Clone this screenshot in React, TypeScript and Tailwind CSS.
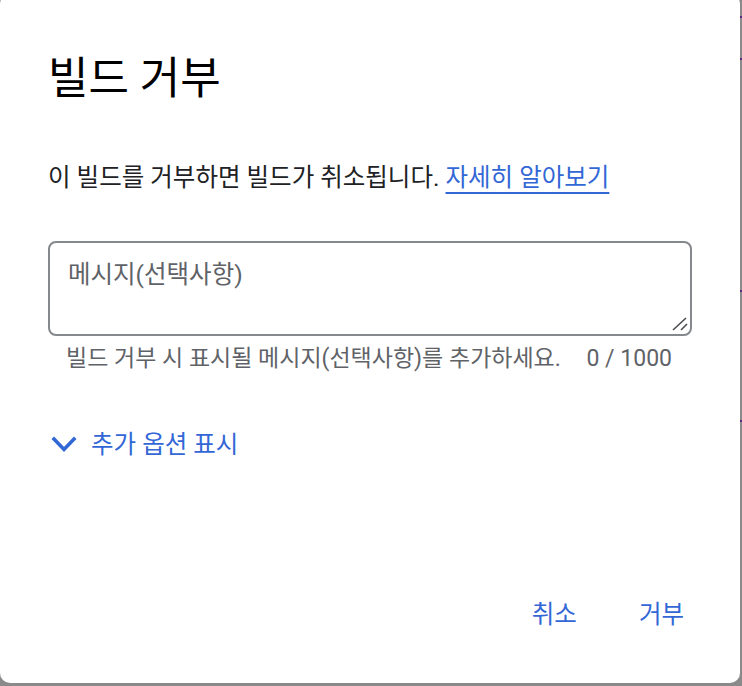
import React from "react";

export default function App() {
  const font = { fontFamily: 'Roboto, "Noto Sans CJK KR", sans-serif' };
  return (
    <div className="relative w-[742px] h-[686px] overflow-hidden bg-[#8a8a8a]" style={font}>
      {/* underlying page marks on right edge */}
      <div className="absolute right-0 top-0 w-[2px] h-full flex flex-col">
        <div className="h-[16px]" />
        <div className="h-[2px] bg-[#5b2a86]" />
        <div className="h-[40px]" />
        <div className="h-[2px] bg-[#5b2a86]" />
        <div className="h-[230px]" />
        <div className="h-[2px] bg-[#5b2a86]" />
        <div className="h-[128px]" />
        <div className="h-[2px] bg-[#5b2a86]" />
      </div>
      <div className="absolute left-0 top-[-6px] w-[740px] h-[689px] bg-white rounded-[10px] flex flex-col px-[48px] pt-[59px] pb-[52px]">
        <h2 className="text-[44px] leading-[52px] text-[#000] font-normal">빌드 거부</h2>
        <p className="mt-[57px] text-[24.5px] leading-[32px] text-[#202124]">
          이 빌드를 거부하면 빌드가 취소됩니다.{" "}
          <a className="text-[#3367d6] underline underline-offset-[6px] decoration-[2px]" href="#">자세히 알아보기</a>
        </p>
        <div className="relative mt-[47px] w-[644px] h-[95px] shrink-0">
          <textarea
            className="w-full h-full resize-none border-2 border-[#85888c] rounded-[8px] px-[18px] pt-[16px] text-[24.5px] leading-[32px] text-[#202124] placeholder:text-[#5f6368] outline-none"
            placeholder="메시지(선택사항)"
          />
          <svg className="absolute right-[3px] bottom-[4px]" width="18" height="16" viewBox="0 0 18 16" fill="none">
            <path d="M2 14 L15 2" stroke="#4a4d51" strokeWidth="1.6" />
            <path d="M10 14 L16 8" stroke="#4a4d51" strokeWidth="1.6" />
          </svg>
        </div>
        <div className="flex justify-between pl-[18px] pr-[20px] mt-[8px] text-[23px] leading-[30px] text-[#5f6368]">
          <span>빌드 거부 시 표시될 메시지(선택사항)를 추가하세요.</span>
          <span>0 / 1000</span>
        </div>
        <button className="mt-[55px] flex items-center gap-[14px] text-[24.5px] leading-[32px] text-[#3367d6] self-start pl-[3px]">
          <svg width="26" height="18" viewBox="0 0 26 18" fill="none">
            <path d="M3 3 L13 13.5 L23 3" stroke="#3367d6" strokeWidth="3.6" strokeLinecap="square" />
          </svg>
          추가 옵션 표시
        </button>
        <div className="mt-auto flex justify-end gap-[62px] pr-[8px] text-[24.5px] leading-[32px] text-[#3367d6]">
          <button>취소</button>
          <button>거부</button>
        </div>
      </div>
    </div>
  );
}
